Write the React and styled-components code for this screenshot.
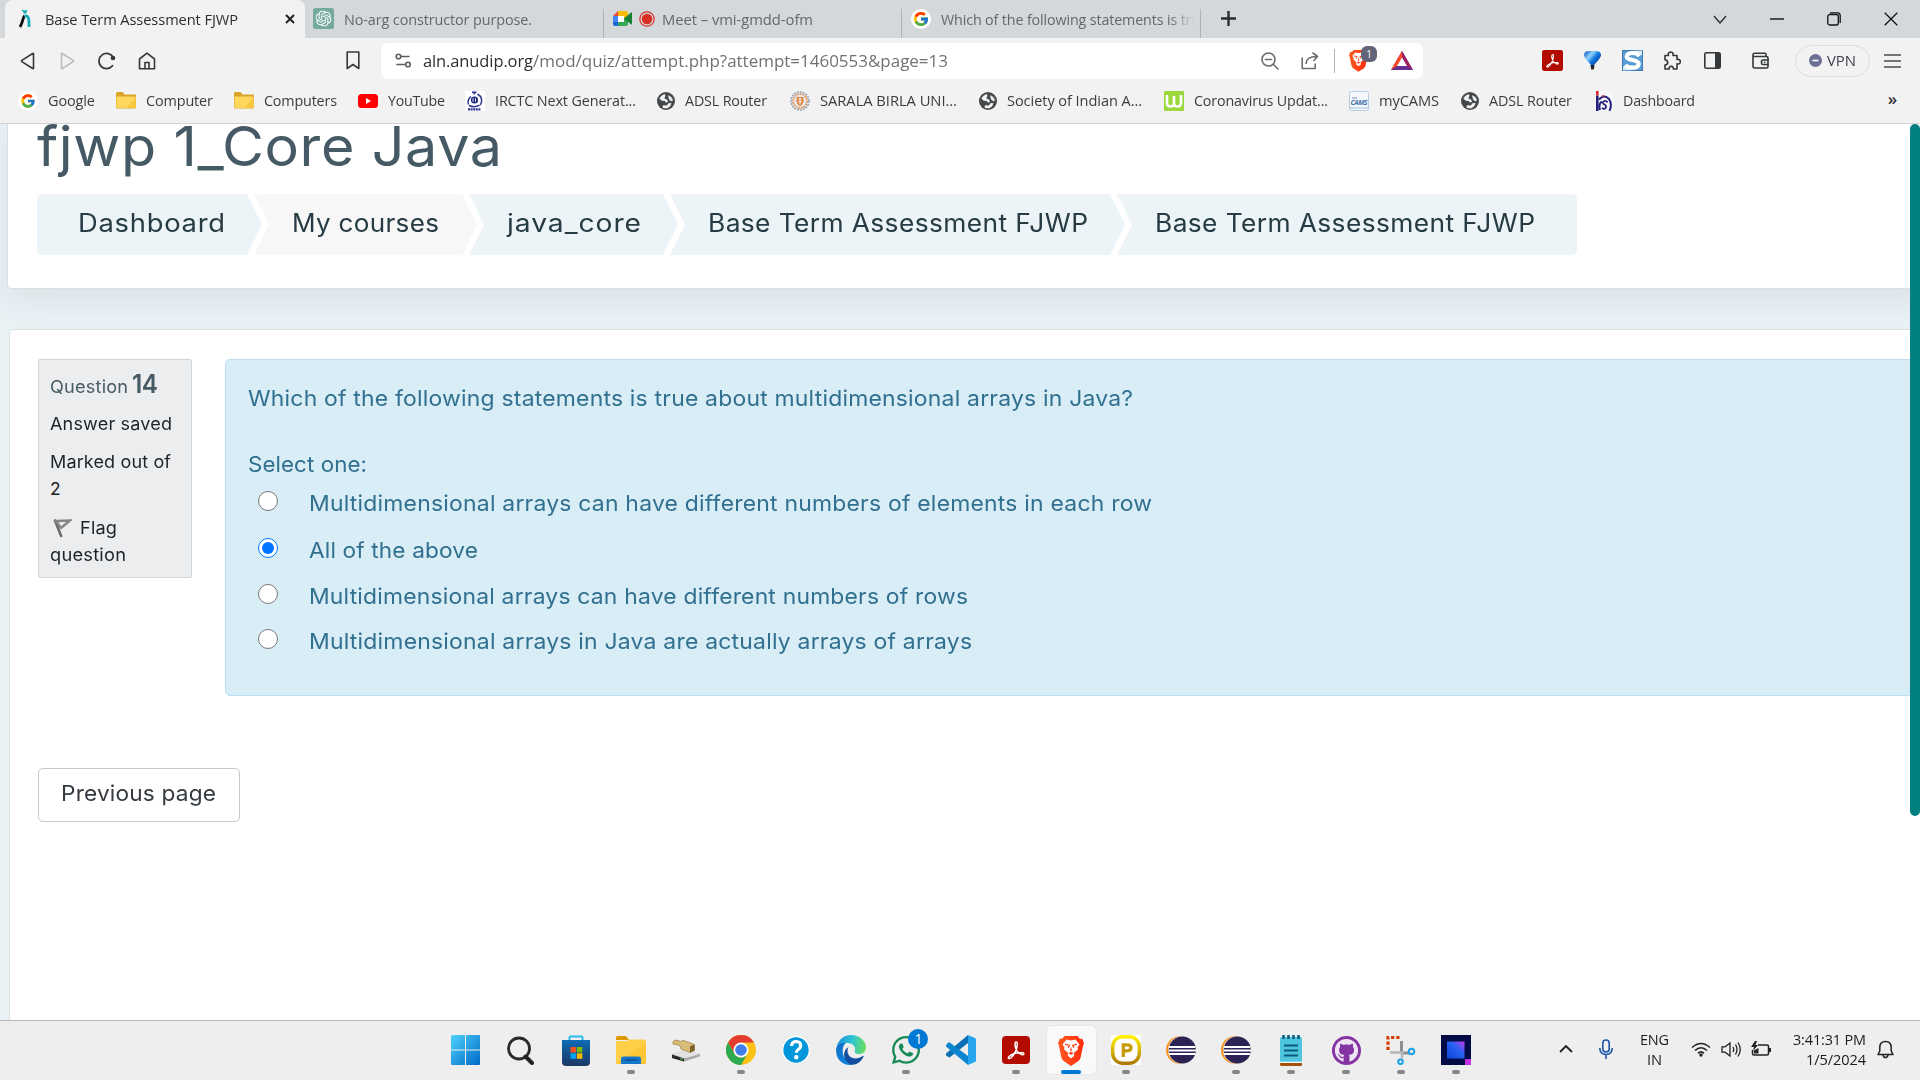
import React, { useLayoutEffect, useRef, useState } from "react";
import styled, { createGlobalStyle, css } from "styled-components";
import { FcGoogle } from "react-icons/fc";
import { FaWhatsapp, FaGithub } from "react-icons/fa6";
import { SiOpenai } from "react-icons/si";

const UI = `"Open Sans", "Noto Sans", sans-serif`;
const BODY = `Inter, "Open Sans", sans-serif`;

const Global = createGlobalStyle`
  *, *::before, *::after { box-sizing: border-box; }
  html, body { margin: 0; padding: 0; overflow: hidden; }
  body { font-family: ${UI}; background: #fff; }
  svg { display: block; flex: none; }
`;

/* Text run fitted to a given width, partly by tracking and partly by stretching */
const Run = styled.span`
  display: block;
  flex: none;
  white-space: nowrap;
  transform-origin: 0 50%;
`;
const TRACKING_SHARE = 0.3;
function Fit({ w, children, className }) {
  const ref = useRef(null);
  const [style, setStyle] = useState({});
  useLayoutEffect(() => {
    const range = document.createRange();
    range.selectNodeContents(ref.current);
    const natural = range.getBoundingClientRect().width;
    const tracked = natural + (w - natural) * TRACKING_SHARE;
    setStyle({
      width: tracked,
      marginRight: w - tracked,
      letterSpacing: (tracked - natural) / Math.max(1, children.length - 1),
      transform: `scaleX(${w / tracked})`,
    });
  }, []);
  return <Run ref={ref} className={className} style={style}>{children}</Run>;
}

const Screen = styled.div`
  width: 1920px;
  height: 1080px;
  display: flex;
  flex-direction: column;
  overflow: hidden;
`;

/* ---------- Tab strip ---------- */
const TabStrip = styled.div`
  height: 38px;
  flex: none;
  display: flex;
  padding-left: 5px;
  background: #d4d8db;
  font-size: 15px;
  color: #64686c;
`;
const Tab = styled.div`
  width: ${(p) => p.$w}px;
  flex: none;
  display: flex;
  align-items: center;
  padding: 0 0 1px ${(p) => p.$pad}px;
  position: relative;
  overflow: hidden;
  ${(p) => p.$active && css`
    background: #f2f2f2;
    border-radius: 8px 8px 0 0;
    color: #2b2e31;
  `}
  ${(p) => p.$divider && css`
    &::after {
      content: "";
      position: absolute;
      right: 0;
      top: 9px;
      bottom: 0;
      width: 1px;
      background: #b0b4b8;
    }
  `}
`;
const TabTitle = styled(Fit)`
  margin-left: ${(p) => p.$ml}px;
`;
const FadeTitle = styled.div`
  width: 253px;
  margin-left: 10px;
  overflow: hidden;
  mask-image: linear-gradient(90deg, #000 228px, transparent 253px);
`;
const Spacer = styled.div`
  flex: ${(p) => (p.$w ? `0 0 ${p.$w}px` : "1")};
`;
const WindowButtons = styled.div`
  display: flex;
  align-items: center;
  gap: 43px;
  padding-right: 22px;
`;

/* ---------- Toolbar ---------- */
const Toolbar = styled.div`
  height: 44px;
  flex: none;
  display: flex;
  align-items: center;
  background: #f2f2f2;
  padding: 1px 19px 0 19px;
`;
const NavGroup = styled.div`
  display: flex;
  align-items: center;
  gap: 21px;
`;
const AddressBar = styled.div`
  width: 1042px;
  height: 36px;
  margin-left: 21px;
  border-radius: 7px;
  background: #fff;
  display: flex;
  align-items: center;
  padding: 0 10px 0 14px;
`;
const Url = styled.div`
  display: flex;
  margin-left: 11px;
  font-size: 17px;
  line-height: 24px;
  color: #6f7275;
`;
const Host = styled(Fit)`
  color: #2c2f33;
`;
const Divider = styled.div`
  width: 1px;
  height: 24px;
  background: #b5b5b5;
  margin: 0 14px 0 15px;
`;
const Shield = styled.div`
  position: relative;
  width: 20px;
`;
const ShieldCount = styled.span`
  position: absolute;
  left: 12px;
  top: -3px;
  width: 16px;
  height: 16px;
  border-radius: 6px;
  background: #62657a;
  color: #fff;
  font-size: 10px;
  line-height: 16px;
  text-align: center;
`;
const Extensions = styled.div`
  display: flex;
  align-items: center;
  margin-left: 119px;
`;
const Extension = styled.div`
  margin-left: ${(p) => p.$ml}px;
`;
const Vpn = styled.div`
  width: 75px;
  height: 32px;
  margin: 0 14px 0 auto;
  border: 1px solid #dddde0;
  border-radius: 16px;
  display: flex;
  align-items: center;
  gap: 5px;
  padding: 0 0 1px 13px;
  font-size: 15px;
  color: #3b3e4f;
`;

/* ---------- Bookmarks ---------- */
const Bookmarks = styled.div`
  height: 42px;
  flex: none;
  display: flex;
  align-items: center;
  background: #f2f2f2;
  border-bottom: 1px solid #d3d3d3;
  padding: 0 23px 4px 18px;
  font-size: 15px;
  line-height: 22px;
  color: #3a3d40;
`;
const Bookmark = styled.div`
  width: ${(p) => p.$w}px;
  flex: none;
  display: flex;
  align-items: center;
  gap: 10px;
`;
const BookmarkLabel = styled(Fit)`
  margin-bottom: 2px;
`;
const More = styled.div`
  margin-left: auto;
  width: 9px;
  display: flex;
  justify-content: center;
  font-size: 17px;
  font-weight: 600;
  padding-bottom: 3px;
  color: #333;
`;

/* ---------- Page ---------- */
const Viewport = styled.div`
  height: 896px;
  flex: none;
  display: flex;
  overflow: hidden;
  font-family: ${BODY};
`;
const Page = styled.main`
  flex: 1;
  overflow: hidden;
  background: #e9f2f5;
`;
const ScrollTrack = styled.div`
  width: 10px;
  flex: none;
  background: #fff;
`;
const ScrollThumb = styled.div`
  height: 692px;
  border-radius: 5px;
  background: #008080;
`;
const HeaderCard = styled.header`
  display: flow-root;
  height: 165px;
  width: 1940px;
  margin-left: 7px;
  padding-left: 29px;
  background: #fff;
  border: 1px solid #d9dfe2;
  border-top: 0;
  border-radius: 0 0 0 5px;
  box-shadow: 0 10px 36px rgba(80, 80, 100, 0.1);
`;
const Title = styled.h1`
  margin: -10px 0 16px;
  font-size: 55px;
  font-weight: 400;
  line-height: 64px;
  color: #465a65;
`;
const Crumbs = styled.nav`
  display: flex;
`;
const Crumb = styled.a`
  width: ${(p) => p.$w}px;
  height: 61px;
  padding: 0 0 3px ${(p) => (p.$first ? 41 : 38)}px;
  margin-left: ${(p) => (p.$first ? 0 : -8)}px;
  display: flex;
  align-items: center;
  font-size: 25px;
  color: #263b43;
  background: ${(p) => (p.$muted ? "#f7f7f7" : "#ecf4f8")};
  border-radius: ${(p) => (p.$first ? "5px 0 0 5px" : p.$last ? "0 5px 5px 0" : 0)};
  clip-path: polygon(
    0 0,
    ${(p) => (p.$last ? "100% 0, 100% 100%" : "calc(100% - 15px) 0, 100% 50%, calc(100% - 15px) 100%")},
    0 100%,
    ${(p) => (p.$first ? "0" : "15px")} 50%
  );
`;
const QuizCard = styled.section`
  width: 1940px;
  height: 760px;
  margin: 40px 0 0 9px;
  padding: 29px 0 0 28px;
  background: #fff;
  border: 1px solid #d9dfe2;
  border-radius: 5px;
`;
const Question = styled.div`
  display: flex;
  align-items: flex-start;
  gap: 33px;
`;
const Info = styled.aside`
  width: 154px;
  height: 219px;
  flex: none;
  padding: 6px 11px;
  background: #ecedef;
  border: 1px solid #cfd5d7;
  border-radius: 2px;
  font-size: 17.5px;
  line-height: 27px;
  color: #1f2326;
`;
const QuestionNo = styled.div`
  display: flex;
  align-items: baseline;
  gap: 4px;
  color: #465a65;
`;
const Number = styled(Fit)`
  font-size: 25.5px;
  font-weight: 600;
  line-height: 36px;
`;
const InfoLine = styled.div`
  margin-top: ${(p) => p.$mt}px;
`;
const FlagLine = styled.div`
  display: flex;
  align-items: center;
  gap: 8px;
  padding-left: 3px;
`;
const Formulation = styled.div`
  flex: 1;
  height: 337px;
  padding: 21px 0 0 22px;
  background: #d9edf7;
  border: 1px solid #bcdff1;
  border-radius: 5px;
  font-size: 22px;
  line-height: 34px;
  color: #31708f;
`;
const Prompt = styled.div`
  margin-top: 32px;
`;
const Answer = styled.label`
  display: flex;
  height: ${(p) => p.$h}px;
  padding: 5px 0 0 10px;
`;
const Radio = styled.input`
  width: 20px;
  height: 20px;
  flex: none;
  margin: 5px 31px 0 0;
`;
const Previous = styled.button`
  display: flex;
  align-items: center;
  width: 202px;
  height: 54px;
  margin-top: 72px;
  padding: 0 0 5px 22px;
  background: #fff;
  border: 1px solid #c8c8c8;
  border-radius: 5px;
  font: 400 22px ${BODY};
  color: #343a40;
`;

/* ---------- Taskbar ---------- */
const Taskbar = styled.footer`
  height: 60px;
  flex: none;
  display: flex;
  background: #eee;
  border-top: 1px solid #b8b8b8;
  padding-left: 438px;
`;
const Apps = styled.div`
  display: grid;
  grid-template-columns: repeat(19, 55.05px);
`;
const AppButton = styled.div`
  position: relative;
  height: 48px;
  width: 49px;
  margin: 5px auto 0;
  display: flex;
  align-items: center;
  justify-content: center;
  border-radius: 4px;
  background: ${(p) => (p.$active ? "#f9f9f9" : "none")};
  box-shadow: ${(p) => (p.$active ? "0 0 1px #bbb" : "none")};
  ${(p) => (p.$open || p.$active) && css`
    &::after {
      content: "";
      position: absolute;
      left: 50%;
      bottom: 0;
      width: ${p.$active ? 20 : 8}px;
      height: 4px;
      margin-left: ${p.$active ? -10 : -4}px;
      border-radius: 2px;
      background: ${p.$active ? "#0078d4" : "#868686"};
    }
  `}
`;
const Badge = styled.span`
  position: absolute;
  left: 27px;
  top: 3px;
  width: 20px;
  height: 20px;
  border-radius: 50%;
  background: #0078d4;
  color: #fff;
  font-size: 14px;
  line-height: 20px;
  text-align: center;
`;
const Tray = styled.div`
  margin-left: auto;
  display: flex;
  align-items: center;
  padding: 0 26px 3px 0;
  font-size: 15px;
  line-height: 20px;
  color: #1c1c1c;
`;
const TrayText = styled.div`
  display: flex;
  flex-direction: column;
  align-items: ${(p) => p.$align};
  margin: 0 ${(p) => p.$mr}px 0 ${(p) => p.$ml}px;
`;
const TrayIcons = styled.div`
  display: flex;
  gap: 10px;
  align-items: center;
`;

/* ---------- Drawings ---------- */
const Svg = ({ w, h = w, vb, children, ...rest }) => (
  <svg width={w} height={h} viewBox={vb || `0 0 ${w} ${h}`} fill="none" {...rest}>{children}</svg>
);
const line = { stroke: "#35383b", strokeWidth: 1.6, strokeLinecap: "round", strokeLinejoin: "round" };

const GoogleDisc = ({ size = 20, g = 16 }) => (
  <Svg w={size} vb="0 0 20 20">
    <circle cx="10" cy="10" r="10" fill="#fff" />
    <FcGoogle x={(20 - g) / 2} y={(20 - g) / 2} size={g} />
  </Svg>
);
const Anudip = () => (
  <Svg w={13} h={19}>
    <path d="M4 1l3 2 2-2" stroke="#19b9c4" strokeWidth="1.4" />
    <circle cx="7" cy="3" r="1.8" fill="#19a9b4" />
    <path d="M6.500 7C5 8 5 13 2 18" stroke="#111" strokeWidth="2.800" />
    <path d="M6.500 7c5-1 4.500 5 4.500 11" stroke="#17a9b6" strokeWidth="2.800" />
  </Svg>
);
const OpenAiIcon = () => (
  <Svg w={21} h={21}>
    <rect width="21" height="21" rx="2.500" fill="#74aa9c" />
    <SiOpenai x="2.500" y="2.500" size={16} color="#fff" />
  </Svg>
);
const Meet = () => (
  <Svg w={20} h={17}>
    <path d="M5 1v5H0z" fill="#ea4335" />
    <path d="M0 6h5v6H0z" fill="#4285f4" />
    <path d="M0 12h5v4H2q-2 0-2-2z" fill="#1967d2" />
    <path d="M5 1h8q2 0 2 2v5l-4 3V6H5z" fill="#fbbc04" />
    <path d="M5 6h6v6H5z" fill="#fff" />
    <path d="M5 12h6V8l4-1v7q0 2-2 2H5z" fill="#34a853" />
    <path d="M11 8.500l7-6q1-.5 1 .5v11q0 1-1 .3z" fill="#188038" />
  </Svg>
);
const Rec = () => (
  <Svg w={16}><circle cx="8" cy="8" r="7.200" stroke="#d93025" strokeWidth="1.200" /><circle cx="8" cy="8" r="5.300" fill="#d93025" /></Svg>
);
const Folder = () => (
  <Svg w={20} h={17}>
    <path d="M0 1.500Q0 0 1.500 0h5l2 2.500H19q1 0 1 1V15q0 1.500-1.500 1.500h-17Q0 16.500 0 15z" fill="#d9a326" />
    <path d="M.5 4.500h19V15q0 1-1 1h-17q-1 0-1-1z" fill="#ffd75e" />
    <path d="M10 16L19.500 6v9q0 1-1 1z" fill="#fbc93e" />
  </Svg>
);
const YouTube = () => (
  <Svg w={20} h={14}><rect width="20" height="14" rx="3.500" fill="#f00" /><path d="M8 4l5 3-5 3z" fill="#fff" /></Svg>
);
const Irctc = () => (
  <Svg w={20}>
    <rect width="20" height="20" fill="#fff" />
    <path d="M7 1.300h3.500l-1.800 2M12.500 3c4.500 2.500 5.300 7 2.800 11M6 5.500C3 8 2.500 11 3.500 13.500M4 14.500q5.500 2.500 10.500-.3" stroke="#29368f" strokeWidth="1.500" />
    <circle cx="9.500" cy="9" r="3.600" fill="#202b85" />
    <path d="M8 7.300v3.400M10.500 7.300v3.400" stroke="#fff" strokeWidth=".9" />
    <path d="M3 18.400h13" stroke="#30358f" strokeWidth="2.400" strokeDasharray="2 .6" />
  </Svg>
);
const Globe = () => (
  <Svg w={18}>
    <circle cx="9" cy="9" r="9" fill="#45484b" />
    <path d="M2.300 6.500Q4 3 7.500 2l1 1.800-1.200 2.400 2.500 1.400 1.400 1.900-2.200 1.200-1.200-1.600-3-.4z" fill="#f2f2f2" />
    <path d="M11 3.200q4 1 5 5l-1.500 1.300-2.500-2z" fill="#f2f2f2" opacity=".95" />
    <path d="M5.500 15.800l.5-2.500 3.800.3 2-2.700 2.800.4-1.600 3.300-3.200 2z" fill="#f2f2f2" />
  </Svg>
);
const Seal = () => (
  <Svg w={20}>
    <circle cx="10" cy="10" r="9" fill="#e6e6ea" stroke="#97a3b5" strokeWidth="1.600" strokeDasharray="2 1" />
    <circle cx="10" cy="10" r="7" stroke="#e0904f" strokeWidth="1.400" strokeDasharray="2 .7" />
    <path d="M6.500 6h7v5q-1 3-3.500 4-2.500-1-3.500-4z" fill="#e08a45" />
    <path d="M8.500 8h3M8.500 10.500h3M10 7v6" stroke="#fff" strokeWidth=".8" />
  </Svg>
);
const WIcon = () => (
  <Svg w={20}><rect width="20" height="20" rx="1" fill="#9ad83e" /><path d="M3 4v8q0 3.500 3.500 3.500T10 12V5v7q0 3.500 3.500 3.500T17 12V4" stroke="#fff" strokeWidth="2.600" /></Svg>
);
const Label = styled.text`
  font: italic 700 7px ${UI};
  fill: #4a6fa5;
`;
const Cams = () => (
  <Svg w={20}><rect x=".5" y=".5" width="19" height="19" rx="2" fill="#f3f8fc" stroke="#b6cce4" /><path d="M3 7h5" stroke="#7a8fb3" /><Label x="1.500" y="14" textLength="17">CAMS</Label><path d="M1 17h18" stroke="#c9daec" strokeWidth="2" /></Svg>
);
const Spiral = () => (
  <Svg w={18} h={20}>
    <rect width="18" height="20" fill="#f8f8fb" />
    <path d="M2.300 4.500V20" stroke="#241f7c" strokeWidth="2.600" /><path d="M2.300 0v4.500" stroke="#d8262c" strokeWidth="2.600" />
    <path d="M4 8.500Q9 3 14 8q3.500 5 .5 12M5 19q-2-6 2-8.500" stroke="#241f7c" strokeWidth="2" />
    <path d="M12.500 11.500q-1-2-3-1.500-2.500 1-1 3 3 1 2.500 3.500-1.500 2.500-4 .5" stroke="#241f7c" strokeWidth="1.700" />
    <circle cx="8" cy="5" r="1.100" fill="#d8262c" />
  </Svg>
);
const Acrobat = ({ w, h = w, r = 2 }) => (
  <Svg w={w} h={h} vb="0 0 28 28">
    <rect width="28" height="28" rx={r} fill="#b30b00" />
    <path d="M6.500 21.500c1.500-3 8.500-5.500 14-4.700 2 .4 1.500 2.200-.2 2-3.800-.5-7.300-5.300-7.300-10.300 0-3.300 2.300-3.300 2.300-.5 0 5-3.300 11.700-6.500 14-1.500 1-3 .6-2.300-.5z" stroke="#fff" strokeWidth="1.500" />
  </Svg>
);
const Lion = ({ w, h, id }) => (
  <Svg w={w} h={h} vb="0 0 26 31">
    <defs><linearGradient id={id}><stop offset="0" stopColor="#ff5a1f" /><stop offset="1" stopColor="#ff2a0a" /></linearGradient></defs>
    <path d="M6.500 1h13l2.500 3 2-.4L26 8l-1 3-2.500 12q-.5 2-2.500 3.300L13 31l-7-4.700Q4 25 3.500 23L1 11 0 8l2-4.400 2 .4z" fill={`url(#${id})`} />
    <path d="M8.500 4.500L13 5.400l4.500-.9 4 5-2 2.800.5 2-4.300 4 .6 2.500L13 23.500l-3.300-2.700.6-2.500-4.300-4 .5-2-2-2.800z" fill="#fff" />
    <path d="M7 9.200l4.300 1.200-1.200 2.400M19 9.200l-4.300 1.200 1.200 2.400" stroke="#ff401a" strokeWidth="1.300" />
    <path d="M13 11.500l1 4-1 .8-1-.8zM10.500 18l2.500-1.300 2.500 1.300L13 20z" fill="#ff401a" />
  </Svg>
);
const Bat = () => <Svg w={22} h={19}><path d="M11 0l11 19H0z" fill="#662d91" /><path d="M11 0L0 19l6-4 5-8z" fill="#ff4724" /><path d="M11 0l11 19-6-4-5-8z" fill="#9e1f63" /><path d="M11 6.500l5 8.500H6z" fill="#fff" /></Svg>;
const Balloon = () => (
  <Svg w={17} h={19}><defs><linearGradient id="bl" x2="1" y2=".7"><stop offset="0" stopColor="#0a50b4" /><stop offset=".4" stopColor="#8fd4ff" /><stop offset=".65" stopColor="#1479de" /><stop offset="1" stopColor="#063c96" /></linearGradient></defs><path d="M0 4.500Q0 0 4.500 0h8Q17 0 17 4.500q0 2-7 9.500H7Q0 6.500 0 4.500z" fill="url(#bl)" /><path d="M6.500 14h4l-.7 4.500H7.200z" fill="#23262b" /></Svg>
);
const SIcon = () => <Svg w={21}><rect x=".5" y=".5" width="20" height="20" fill="#5a9dd4" stroke="#3a7ab5" /><path d="M20 .5V5L9 1zM1 20.500V16l11 4z" fill="#d7e8f6" /><path d="M17.500 6q-2-3-7-3-5.800 0-5.800 3.700c0 4.300 12 2.300 12 7 0 3-2.800 4-6.200 4Q5.500 17.700 3.300 15" stroke="#fff" strokeWidth="4.200" /></Svg>;
const Puzzle = () => <Svg w={18} h={19}><path d="M2 4.500h3.500q-.8-3.300 2.200-3.500 3 .2 2.300 3.500h4v4q3.200-.6 3.400 2.200-.2 2.800-3.400 2.200V18h-3.700q.3-2.600-2-2.700-2.300.1-2.100 2.700H2v-4q2.700-.3 2.700-2.600T2 8.700z" {...line} /></Svg>;
const Sidebar = () => <Svg w={17}><rect x=".8" y=".8" width="15.400" height="15.400" rx="1.500" {...line} /><path d="M11 1h5v15h-5z" fill="#35383b" /></Svg>;
const Wallet = () => <Svg w={17} h={17}><path d="M2 4.500h12.500q1.500 0 1.500 1.500v8.500q0 1.500-1.500 1.500h-12Q1 16 1 14.500V3q0-1.800 1.700-1.800H13q1 0 1 1.300v2" {...line} /><path d="M16 8h-5q-1.500 0-1.500 1.300v2q0 1.200 1.500 1.200h5M12.500 10.300h.3" {...line} /></Svg>;

const WinLogo = () => (
  <Svg w={29} h={30} vb="0 0 29 29" preserveAspectRatio="none"><defs><linearGradient id="wn" gradientUnits="userSpaceOnUse" x1="0" y1="0" x2="29" y2="29"><stop offset="0" stopColor="#4fd3fb" /><stop offset="1" stopColor="#0067c8" /></linearGradient></defs><path d="M1 0h13v14H0V1q0-1 1-1zM15 0h13q1 0 1 1v13H15zM0 15h14v14H1q-1 0-1-1zM15 15h14v13q0 1-1 1H15z" fill="url(#wn)" /></Svg>
);
const Search = () => <Svg w={27} h={29}><circle cx="12" cy="12.500" r="10.500" stroke="#2a2a2a" strokeWidth="2.800" /><path d="M18.500 20.500L25 27" stroke="#222" strokeWidth="4" strokeLinecap="round" /></Svg>;
const Store = () => (
  <Svg w={30} h={31}><defs><linearGradient id="st" x2="0" y2="1"><stop offset="0" stopColor="#0d6cb5" /><stop offset="1" stopColor="#1d3665" /></linearGradient></defs><path d="M8.500 5V2.500q0-1 1-1h11q1 0 1 1V5" stroke="#27bdf2" strokeWidth="2" /><path d="M1 5h28v22q0 4-4 4H5q-4 0-4-4z" fill="url(#st)" /><path d="M9.500 12h5.500v5.500H9.500z" fill="#f25022" /><path d="M15.800 12h5.500v5.500h-5.500z" fill="#7fba00" /><path d="M9.500 18.300h5.500v5.500H9.500z" fill="#00a4ef" /><path d="M15.800 18.300h5.500v5.500h-5.500z" fill="#ffb900" /></Svg>
);
const Explorer = () => (
  <Svg w={30} h={29}><path d="M0 2q0-2 2-2h8l3 4H0z" fill="#dd9a04" /><path d="M0 5h11l2-1.500h15q2 0 2 2V27q0 1-1 1H1q-1 0-1-1z" fill="#ffcf48" /><path d="M0 27L30 8v19q0 1-1 1H1q-1 0-1-1z" fill="#fbbf24" opacity=".5" /><path d="M5 28v-5q0-2.500 2.500-2.500h15Q25 20.500 25 23v5z" fill="#1576c9" /><path d="M9 24h12" stroke="#0b5196" strokeWidth="1.500" /></Svg>
);
const Drive = () => <Svg w={28} h={23}><path d="M0 15.500l13-4.500 15 4v2.500L12 22.500 0 19z" fill="#a9a9a9" /><path d="M0 15.500l13-4.500 15 4-16 4.500z" fill="#e2e2e2" /><path d="M0 15.500l12 4v3L0 19z" fill="#2b2b2b" /><path d="M8 20h3" stroke="#5ad15a" /><path d="M1 2.500L4 1l5 1.500 2-1.200 11.500 4.200v6l-4.500 2L9 10 8 6.500 1 5z" fill="#d8bd78" stroke="#9a7d3c" strokeWidth=".7" /><path d="M18 7.300l4.500-1.800v6l-4.500 2z" fill="#7c6228" /></Svg>;
const Chrome = () => <Svg w={30} vb="0 0 30 30"><circle cx="15" cy="15" r="15" fill="#fbc116" /><path d="M2 7.500A15 15 0 0 1 28 7.500H15L8.500 18.800z" fill="#e33b2e" /><path d="M2 7.500A15 15 0 0 0 15 30l6.500-11.200a7.500 7.500 0 0 1-13 0z" fill="#2da94f" /><circle cx="15" cy="15" r="7.500" fill="#fff" /><circle cx="15" cy="15" r="5.800" fill="#3f7ee8" /></Svg>;
const Help = () => <Svg w={28}><circle cx="14" cy="14" r="13.300" fill="#0096db" stroke="#fff" strokeWidth="1.300" /><path d="M9.500 10q.3-4.500 4.700-4.500 4.500.2 4.500 4 0 2.500-2.500 4-1.800 1.200-1.800 3.200" stroke="#fff" strokeWidth="3.200" /><circle cx="14.300" cy="21.300" r="2.200" fill="#fff" /></Svg>;
const Edge = () => (
  <Svg w={30} vb="0 0 30 30"><defs><linearGradient id="e1" x1="0" y1=".4" x2="1" y2=".5"><stop offset="0" stopColor="#1b8fdc" /><stop offset=".5" stopColor="#2cc3d8" /><stop offset="1" stopColor="#69e05a" /></linearGradient><linearGradient id="e2" x2="0" y2="1"><stop offset="0" stopColor="#0f6fc9" /><stop offset="1" stopColor="#1283da" /></linearGradient></defs>
    <path d="M.5 13C2 4 8.500 0 15 0c8.500 0 15 6 15 12.500 0 4-3 6.500-6.500 6.500-4 0-5.500-1.500-4.500-3.500C20 11 16 8 11.500 8 6 8 1.500 10.500.5 13z" fill="url(#e1)" />
    <path d="M.3 13C2 9 6 7.500 10 7.800 6 11 5.500 18 9 23.500 11 26.500 14 29 17 29.700 7 31.500-1.300 24 .3 13z" fill="url(#e2)" />
    <path d="M12.500 12c-2 4-1 8.500 3 10.500s8.500.5 11-1.500q1.500-.5 1 .8C25 27 20.500 30 16 29.800 9.500 28 7 22 8.500 17q1-3.500 4-5z" fill="#134fa0" />
  </Svg>
);
const VsCode = () => <Svg w={30} vb="0 0 30 30"><path d="M22 0v8L3.500 22.500 0 20.500v-2z" fill="#0a6fb5" /><path d="M3 7l19 14v9L0 11.500V10z" fill="#0e86cf" /><path d="M22 0l7 3q1 .5 1 1.500v21q0 1-1 1.500l-7 3z" fill="#28a5ef" /></Svg>;
const PIcon = () => <Svg w={30}><defs><linearGradient id="pg" x2="0" y2="1"><stop offset="0" stopColor="#fff000" /><stop offset="1" stopColor="#b07c06" /></linearGradient></defs><rect width="30" height="30" fill="#fff" /><rect x="1.700" y="1.700" width="26.600" height="26.600" rx="10" stroke="url(#pg)" strokeWidth="3.400" fill="#fff" /><path d="M12.300 22V9.800h4q3.700 0 3.700 3t-3.700 3h-4" stroke="#c69c0c" strokeWidth="3.300" /></Svg>;
const Eclipse = () => <Svg w={30} h={28}><circle cx="13.700" cy="14" r="13.700" fill="#f7941e" /><circle cx="15.700" cy="14" r="13.700" fill="#f6e8d4" /><circle cx="16.300" cy="14" r="13.600" fill="#2c2255" /><path d="M3 11h26.500M3 14.500h27M3 18h26.500" stroke="#fff" strokeWidth="1.800" /></Svg>;
const Notepad = () => <Svg w={24} h={31}><rect x="1" y="2" width="22" height="27" rx="2" fill="#4fc4de" /><path d="M1 28h22v1.500q0 1.500-1.500 1.500h-19Q1 31 1 29.500z" fill="#a4510d" /><path d="M1 27.300h22" stroke="#e9f6f9" strokeWidth="1.400" /><path d="M5 10.500h14M5 15.500h14M5 20.500h14" stroke="#0b5a79" strokeWidth="1.800" /><path d="M4.500 0v4M9.500 0v4M14.500 0v4M19.500 0v4" stroke="#0d5f80" strokeWidth="2.600" /></Svg>;
const GitHubApp = () => <Svg w={29}><circle cx="14.500" cy="14.500" r="14.500" fill="#8534a3" /><FaGithub x="2.500" y="2.500" size={24} color="#eee4f3" /></Svg>;
const Snip = () => <Svg w={30} h={30}><path d="M2 15V2.500h12.500" stroke="#d83b01" strokeWidth="3.200" strokeDasharray="3.200 2" /><path d="M15.500 6v11q0 1 1 1H23" stroke="#8b9095" strokeWidth="3" /><path d="M4 17.500h12v6" stroke="#b4b8bc" strokeWidth="2.500" /><circle cx="25.500" cy="16.500" r="2.800" stroke="#1aa0e8" strokeWidth="2" /><circle cx="14.500" cy="26.800" r="2.300" stroke="#1aa0e8" strokeWidth="2" /></Svg>;
const Capture = () => <Svg w={30}><defs><linearGradient id="cp" x1="0" y1="1" x2="1" y2="0"><stop offset="0" stopColor="#0846d8" /><stop offset=".6" stopColor="#2a62f2" /><stop offset="1" stopColor="#c63af0" /></linearGradient></defs><rect width="30" height="30" fill="#020b45" /><rect x="6" y="6.500" width="17.500" height="17" fill="url(#cp)" /><rect x="24" y="24" width="6" height="6" fill="#c02fe0" /></Svg>;

const bookmarks = [
  [<GoogleDisc />, "Google", 98, 47], [<Folder />, "Computer", 118, 67], [<Folder />, "Computers", 124, 73],
  [<YouTube />, "YouTube", 107, 57], [<Irctc />, "IRCTC Next Generat...", 192, 141], [<Globe />, "ADSL Router", 133, 82],
  [<Seal />, "SARALA BIRLA UNI...", 189, 137], [<Globe />, "Society of Indian A...", 185, 135],
  [<WIcon />, "Coronavirus Updat...", 185, 134], [<Cams />, "myCAMS", 112, 60], [<Globe />, "ADSL Router", 134, 83], [<Spiral />, "Dashboard", 110, 72],
];
const crumbs = [
  ["Dashboard", 225, 147], ["My courses", 223, 147], ["java_core", 209, 134],
  ["Base Term Assessment FJWP", 455, 380], ["Base Term Assessment FJWP", 460, 380],
];
const answers = [
  ["Multidimensional arrays can have different numbers of elements in each row", 47, 843],
  ["All of the above", 46, 169],
  ["Multidimensional arrays can have different numbers of rows", 45, 659],
  ["Multidimensional arrays in Java are actually arrays of arrays", 46, 663],
];
const apps = [
  [WinLogo], [Search], [Store], [Explorer, 1], [Drive], [Chrome, 1], [Help], [Edge],
  [() => <><FaWhatsapp size={32} color="#178a55" /><Badge>1</Badge></>, 1], [VsCode],
  [() => <Acrobat w={28} r={4} />, 1], [() => <Lion w={26} h={31} id="lion-app" />, 2], [PIcon, 1],
  [Eclipse], [Eclipse, 1], [Notepad, 1], [GitHubApp, 1], [Snip, 1], [Capture, 1],
];

export default function App() {
  return (
    <Screen>
      <Global />
      <TabStrip>
        <Tab $w={300} $pad={13} $active>
          <Anudip /><TabTitle w={193} $ml={14}>Base Term Assessment FJWP</TabTitle>
          <Spacer $w={47} />
          <Svg w={10}><path d="M1 1l8 8M9 1L1 9" stroke="#222" strokeWidth="2" /></Svg>
        </Tab>
        <Tab $w={299} $pad={8} $divider><OpenAiIcon /><TabTitle w={188} $ml={10}>No-arg constructor purpose.</TabTitle></Tab>
        <Tab $w={298} $pad={9} $divider><Meet /><Spacer $w={6} /><Rec /><TabTitle w={151} $ml={7}>Meet – vmi-gmdd-ofm</TabTitle></Tab>
        <Tab $w={299} $pad={9} $divider><GoogleDisc g={17} /><FadeTitle><Fit w={267}>Which of the following statements is true</Fit></FadeTitle></Tab>
        <Tab $w={60} $pad={20}><Svg w={15}><path d="M7.500 0v15M0 7.500h15" stroke="#2b2e31" strokeWidth="2.400" /></Svg></Tab>
        <Spacer />
        <WindowButtons>
          <Svg w={14} h={9}><path d="M1 1l6 7 6-7" stroke="#222" strokeWidth="1.200" /></Svg>
          <Svg w={14} h={2}><path d="M0 1h14" stroke="#111" strokeWidth="1.400" /></Svg>
          <Svg w={14}><rect x=".8" y="2.500" width="10.500" height="10.500" rx="2" stroke="#111" strokeWidth="1.300" /><path d="M3 .8h7.500q2.700 0 2.700 2.700V11" stroke="#111" strokeWidth="1.300" /></Svg>
          <Svg w={14}><path d="M.7.7l12.600 12.600M13.300.7L.7 13.300" stroke="#111" strokeWidth="1.300" /></Svg>
        </WindowButtons>
      </TabStrip>

      <Toolbar>
        <NavGroup>
          <Svg w={18}><path d="M14.500 1.500v15q-.2.500-.8 0L2.800 9.600q-.6-.6 0-1.200L13.700 1.500q.6-.5.8 0z" {...line} /></Svg>
          <Svg w={18}><path d="M3.500 1.500v15q.2.500.8 0l10.900-6.900q.6-.6 0-1.200L4.300 1.500q-.6-.5-.8 0z" {...line} stroke="#bdbdbd" /></Svg>
          <Svg w={20}><path d="M15.500 14.800A7.600 7.600 0 1 1 16.300 6.500" {...line} strokeWidth="1.800" /><circle cx="16" cy="7" r="2.300" fill="#35383b" /></Svg>
          <Svg w={18}><path d="M1.500 7L9 1.200 16.500 7v9.800h-15z" {...line} /><path d="M7 16.500v-6h4v6" {...line} /></Svg>
        </NavGroup>
        <Spacer $w={190} />
        <Svg w={14} h={19}><path d="M1.200 1h11.600v16.500L7 13.500l-5.800 4z" {...line} /></Svg>
        <AddressBar>
          <Svg w={17} h={15}><circle cx="3.500" cy="3.500" r="2.300" {...line} stroke="#5c5f62" /><path d="M6 3.500h8M2 11.500h8" {...line} stroke="#5c5f62" /><circle cx="13" cy="11.500" r="2.300" {...line} stroke="#5c5f62" /></Svg>
          <Url><Host w={110}>aln.anudip.org</Host><Fit w={415}>/mod/quiz/attempt.php?attempt=1460553&page=13</Fit></Url>
          <Spacer />
          <Svg w={18}><circle cx="7.500" cy="7.500" r="6.500" {...line} stroke="#6b6e70" /><path d="M4.500 7.500h6M12.500 12.500l4.500 4.500" {...line} stroke="#6b6e70" /></Svg>
          <Spacer $w={22} />
          <Svg w={18} h={18}><path d="M1.200 6v10.500h13V12M5 11.500q.5-7 10.500-7M12 1l4.500 3.500L13 8.500" {...line} stroke="#6b6e70" /></Svg>
          <Divider />
          <Shield><Lion w={19} h={23} id="lion-bar" /><ShieldCount>1</ShieldCount></Shield>
          <Spacer $w={22} />
          <Bat />
        </AddressBar>
        <Extensions>
          <Extension $ml={0}><Acrobat w={21} r={3} /></Extension>
          <Extension $ml={21}><Balloon /></Extension>
          <Extension $ml={21}><SIcon /></Extension>
          <Extension $ml={20}><Puzzle /></Extension>
          <Extension $ml={23}><Sidebar /></Extension>
          <Extension $ml={31}><Wallet /></Extension>
        </Extensions>
        <Vpn><Svg w={13}><circle cx="6.500" cy="6.500" r="6.500" fill="#6b6f94" /><path d="M3.500 6.500h6" stroke="#fff" strokeWidth="1.600" /></Svg><Fit w={29}>VPN</Fit></Vpn>
        <Svg w={17} h={14}><path d="M0 1h17M0 7h17M0 13h17" stroke="#4a4d50" strokeWidth="1.700" /></Svg>
      </Toolbar>

      <Bookmarks>
        {bookmarks.map(([icon, label, w, tw], i) => (
          <Bookmark key={i} $w={w}>{icon}<BookmarkLabel w={tw}>{label}</BookmarkLabel></Bookmark>
        ))}
        <More>»</More>
      </Bookmarks>

      <Viewport>
        <Page>
          <HeaderCard>
            <Title><Fit w={465}>fjwp 1_Core Java</Fit></Title>
            <Crumbs>
              {crumbs.map(([t, w, tw], i) => (
                <Crumb key={i} $w={w} $first={i === 0} $last={i === 4} $muted={i === 1}><Fit w={tw}>{t}</Fit></Crumb>
              ))}
            </Crumbs>
          </HeaderCard>
          <QuizCard>
            <Question>
              <Info>
                <QuestionNo><Fit w={78}>Question</Fit><Number w={26}>14</Number></QuestionNo>
                <InfoLine $mt={8}><Fit w={122}>Answer saved</Fit></InfoLine>
                <InfoLine $mt={11}><Fit w={121}>Marked out of</Fit>2</InfoLine>
                <InfoLine $mt={12}>
                  <FlagLine>
                    <Svg w={19} h={20}><path d="M1.500 1.500L8.500 19" stroke="#666" strokeWidth="2.400" /><path d="M3 3l14-.5L8 10z" stroke="#858585" strokeWidth="2.400" /></Svg>
                    <Fit w={37}>Flag</Fit>
                  </FlagLine>
                  <Fit w={76}>question</Fit>
                </InfoLine>
              </Info>
              <Formulation>
                <Fit w={885}>Which of the following statements is true about multidimensional arrays in Java?</Fit>
                <Prompt><Fit w={119}>Select one:</Fit></Prompt>
                {answers.map(([t, h, tw], i) => (
                  <Answer key={i} $h={h}><Radio type="radio" name="answer" defaultChecked={i === 1} /><Fit w={tw}>{t}</Fit></Answer>
                ))}
              </Formulation>
            </Question>
            <Previous><Fit w={155}>Previous page</Fit></Previous>
          </QuizCard>
        </Page>
        <ScrollTrack><ScrollThumb /></ScrollTrack>
      </Viewport>

      <Taskbar>
        <Apps>
          {apps.map(([Icon, state], i) => (
            <AppButton key={i} $open={state === 1} $active={state === 2}><Icon /></AppButton>
          ))}
        </Apps>
        <Tray>
          <Svg w={14} h={8}><path d="M1 7l6-6 6 6" stroke="#222" strokeWidth="1.800" /></Svg>
          <Spacer $w={26} />
          <Svg w={14} h={20}><rect x="3.800" y="1" width="6.400" height="12" rx="3.200" stroke="#1c56a8" strokeWidth="1.600" /><path d="M.8 9q0 6.500 6.200 6.500T13.200 9M7 15.500V20" stroke="#1c56a8" strokeWidth="1.600" /></Svg>
          <TrayText $align="center" $ml={27} $mr={22}><Fit w={29}>ENG</Fit><Fit w={15}>IN</Fit></TrayText>
          <TrayIcons>
            <Svg w={20} h={15}><path d="M1 5.500q9-8 18 0M4 8.500q6-5.500 12 0M7 11.300q3-2.800 6 0" stroke="#222" strokeWidth="1.600" /><circle cx="10" cy="13" r="1.700" fill="#222" /></Svg>
            <Svg w={20} h={17}><path d="M1 5.800h3L9 2v13l-5-3.800H1zM12 6q1.500 2.500 0 5M14.500 3.500q3 5 0 10M17 1.500q4.500 7 0 14" stroke="#222" strokeWidth="1.300" /></Svg>
            <Svg w={20} h={16}><path d="M7 4h9q1.500 0 1.500 1.500v7q0 1.500-1.500 1.500H3q-1.500 0-1.500-1.500V9" stroke="#222" strokeWidth="1.500" /><path d="M4 0L0 6h3L2 10l5-6H4.500L6 0zM3 12.500V9.500L7.500 7v5.500zM18 7h2v4h-2z" fill="#222" /></Svg>
          </TrayIcons>
          <TrayText $align="flex-end" $ml={22} $mr={11}><Fit w={73}>3:41:31 PM</Fit><Fit w={60}>1/5/2024</Fit></TrayText>
          <Svg w={17} h={19}><path d="M1 14.500l1.800-3.500V7.500q0-6 5.700-6t5.700 6V11l1.800 3.500zM6 15q.5 2.500 2.500 2.500T11 15" stroke="#222" strokeWidth="1.500" strokeLinejoin="round" /></Svg>
        </Tray>
      </Taskbar>
    </Screen>
  );
}
